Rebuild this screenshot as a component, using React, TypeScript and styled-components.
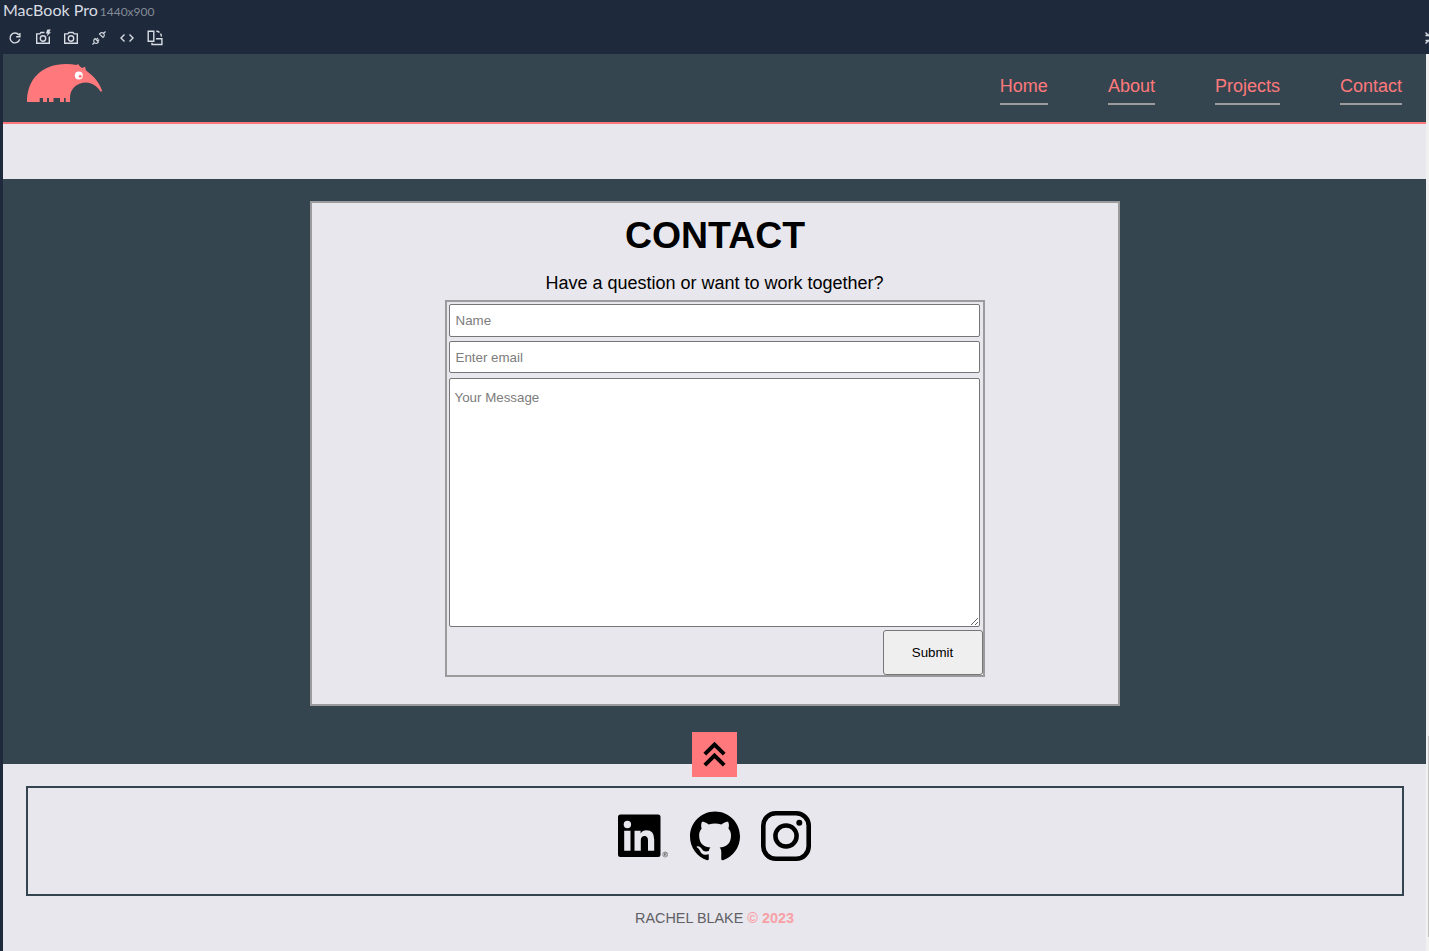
import React from "react";
import styled, { createGlobalStyle } from "styled-components";

const c = {
  navy: "#1e293b",
  charcoal: "#354550",
  pink: "#ff797c",
  light: "#e8e7ed",
  grey: "#9b9a9c",
};

const Global = createGlobalStyle`
  * { box-sizing: border-box; }
  body { margin: 0; overflow: hidden; background: ${c.navy}; font-family: "Liberation Sans", Arial, sans-serif; }
`;

const Shell = styled.div`
  width: 100%;
  height: 951px;
  padding-left: 3px;
  display: flex;
  flex-direction: column;
  overflow: hidden;
`;
const DeviceBar = styled.div`
  height: 54px;
  flex: none;
  color: #d8dce3;
  font-family: Lato, sans-serif;
`;
const DeviceTitle = styled.div`
  height: 22px;
  font-size: 16px;
  line-height: 20px;
  white-space: nowrap;
`;
const DeviceSize = styled.span`
  margin-left: 2px;
  font-size: 12px;
  color: #848b97;
`;
const Tools = styled.div`
  display: flex;
  align-items: center;
  height: 32px;
  padding-left: 4px;
  gap: 12px;
  svg { width: 16px; height: 16px; flex: none; overflow: visible; }
  svg:last-child { margin-left: auto; margin-right: -12px; }
`;
const Viewport = styled.div`
  flex: 1;
  min-height: 0;
  display: flex;
`;
const Page = styled.div`
  flex: 1;
  background: ${c.light};
`;
const Scrollbar = styled.div`
  width: 3px;
  padding: 682px 0 0 2px;
  background: #f1f1f1;
`;
const Thumb = styled.div`
  height: 201px;
  background: #c1c1c1;
`;
const Header = styled.header`
  height: 70px;
  padding: 10px 24px 0;
  display: flex;
  justify-content: space-between;
  background: ${c.charcoal};
  border-bottom: 2px solid ${c.pink};
`;
const Nav = styled.nav`
  display: flex;
  gap: 60px;
  padding-top: 11px;
`;
const NavLink = styled.a`
  height: 30px;
  font-size: 18px;
  line-height: 22px;
  color: ${c.pink};
  border-bottom: 2px solid ${c.grey};
`;
const Contact = styled.section`
  height: 585px;
  margin-top: 55px;
  padding-top: 22px;
  background: ${c.charcoal};
`;
const Card = styled.div`
  width: 810px;
  height: 505px;
  margin: 0 auto;
  display: flex;
  flex-direction: column;
  align-items: center;
  background: ${c.light};
  border: 2px solid ${c.grey};
`;
const Title = styled.h1`
  margin: 10px 0 0;
  padding-left: 1px;
  font-size: 37.4px;
  line-height: 44px;
  color: #000;
`;
const Lead = styled.p`
  margin: 15px 0 0;
  font-size: 18px;
  line-height: 22px;
  color: #000;
`;
const Form = styled.form`
  width: 540px;
  height: 377px;
  margin-top: 6px;
  padding: 2px 0 0 2px;
  border: 2px solid ${c.grey};
  display: flex;
  flex-direction: column;
`;
const Input = styled.input<{ $h: number }>`
  width: 531px;
  height: ${(p) => p.$h}px;
  margin: 0 0 4px;
  padding: 1px 6px;
  border: 1px solid #767676;
  border-radius: 2px;
  font: 13.33px "Liberation Sans", Arial, sans-serif;
  &::placeholder { color: #7c7c7c; }
`;
const Message = styled.textarea`
  width: 531px;
  height: 249px;
  margin: 1px 0 3px;
  padding: 11px 5px;
  border: 1px solid #767676;
  border-radius: 2px;
  font: 13.33px "Liberation Sans", Arial, sans-serif;
  &::placeholder { color: #7c7c7c; }
`;
const Submit = styled.button`
  align-self: flex-end;
  width: 100px;
  height: 45px;
  padding: 0;
  border: 1px solid #767676;
  border-radius: 3px;
  background: #efefef;
  color: #000;
  font: 13.33px "Liberation Sans", Arial, sans-serif;
`;
const ToTop = styled.a`
  position: relative;
  display: block;
  width: 45px;
  height: 45px;
  margin: 26px auto 0;
  background: ${c.pink};
  color: #000;
  svg { display: block; }
`;
const Footer = styled.footer`
  padding: 22px 22px 0 23px;
`;
const Socials = styled.div`
  height: 110px;
  padding: 23px 1px 0 0;
  display: flex;
  justify-content: center;
  gap: 21.5px;
  border: 2px solid ${c.charcoal};
  svg { width: 50px; height: 50px; }
`;
const Copyright = styled.p`
  margin: 13px 0 0;
  padding-right: 1px;
  text-align: center;
  font-size: 14.4px;
  line-height: 18px;
  color: #606065;
  b { color: #f7a0a6; }
`;

const Stroke = ({ children }: { children: React.ReactNode }) => (
  <svg viewBox="0 0 16 16" fill="none" stroke="currentColor" strokeWidth="1.4">
    {children}
  </svg>
);

const Tapir = () => (
  <svg width="76" height="39" viewBox="0 0 76 39">
    <path
      fill={c.pink}
      d="M0 38C0 15 15 0 39 0Q45 0 49.500 1L51 0L53 2.500L55 4L58 2.700L59 6.500C67 12 72.500 19 75.300 27.300L73.500 27.500C70 22 65 18.500 59 18.500C50 18.500 43 25 43 33.500V38H38.700V34H37V38H33V34H26.500V38H22V34H20V38H16V34H12.700V38Z"
    />
    <circle cx="51.800" cy="11.500" r="4" fill="#fff" />
    <circle cx="53.200" cy="12.300" r="1.500" fill={c.pink} />
  </svg>
);

const ChevronsUp = () => (
  <svg width="45" height="45" viewBox="0 0 45 45" fill="none" stroke="currentColor" strokeWidth="3.900">
    <path d="M12.800 22.200L22.500 12.500L32.200 22.200M12.800 33.200L22.500 23.500L32.200 33.200" />
  </svg>
);

const LinkedIn = () => (
  <svg viewBox="0 0 50 50">
    <path
      fillRule="evenodd"
      d="M2.500 3.500H40Q42.500 3.500 42.500 6V43.500Q42.500 46 40 46H2.500Q0 46 0 43.500V6Q0 3.500 2.500 3.500ZM6.200 19.700V39.700H12.500V19.700ZM9.400 9.800A3.700 3.700 0 1 0 9.400 17.200A3.700 3.700 0 1 0 9.400 9.800ZM16.500 19.700V39.700H22.800V29.500Q22.800 25 26.500 25Q30 25 30 29.500V39.700H36.200V28.500Q36.200 19.200 28.500 19.200Q24.500 19.200 22.600 22.500V19.700Z"
    />
    <circle cx="47.200" cy="43.500" r="2.500" fill="none" stroke="#555" strokeWidth=".6" />
    <path d="M46.300 45V42H47.500Q48.400 42 48.400 42.800T47.500 43.600H46.300M47.400 43.600L48.400 45" fill="none" stroke="#444" strokeWidth=".6" />
  </svg>
);

const GitHub = () => (
  <svg viewBox="0 -.15 16 16">
    <path d="M8 0C3.580 0 0 3.580 0 8c0 3.540 2.290 6.530 5.470 7.590.4.070.55-.17.55-.38 0-.19-.01-.82-.01-1.490-2.010.37-2.530-.49-2.690-.94-.09-.23-.48-.94-.82-1.130-.28-.15-.68-.52-.01-.53.63-.01 1.080.58 1.230.82.72 1.210 1.870.87 2.330.66.07-.52.28-.87.51-1.070-1.780-.2-3.640-.89-3.640-3.950 0-.87.31-1.590.82-2.150-.08-.2-.36-1.020.08-2.120 0 0 .67-.21 2.200.82.64-.18 1.320-.27 2-.27s1.360.09 2 .27c1.530-1.040 2.200-.82 2.200-.82.44 1.100.16 1.920.08 2.120.51.56.82 1.270.82 2.150 0 3.070-1.870 3.750-3.650 3.950.29.25.54.73.54 1.480 0 1.070-.01 1.930-.01 2.200 0 .21.15.46.55.38A8.010 8.010 0 0 0 16 8c0-4.420-3.580-8-8-8z" />
  </svg>
);

const Instagram = () => (
  <svg viewBox="0 0 50 50" fill="none" stroke="#000">
    <rect x="2.300" y="2.300" width="45.400" height="45.400" rx="12.500" strokeWidth="4.600" />
    <circle cx="25" cy="25" r="10.600" strokeWidth="4.500" />
    <circle cx="38.300" cy="11.700" r="3" fill="#000" stroke="none" />
  </svg>
);

const links = ["Home", "About", "Projects", "Contact"];

export default function App() {
  return (
    <Shell>
      <Global />
      <DeviceBar>
        <DeviceTitle>
          MacBook Pro<DeviceSize>1440x900</DeviceSize>
        </DeviceTitle>
        <Tools>
          <Stroke>
            <path d="M11.900 5A4.900 4.900 0 1 0 12.700 9.300M12.900 3V6.700H9.200" />
          </Stroke>
          <Stroke>
            <path d="M9.500 2.500H6L4.800 3.900H1.700V13.300H14.300V6.500" />
            <circle cx="8" cy="8.500" r="2.700" />
            <path d="M12.300 -.5H15.800L14.300 2.200H16L11.500 6.500L12.700 3.500H10.800Z" fill="currentColor" stroke="none" />
          </Stroke>
          <Stroke>
            <path d="M1.700 3.900H4.800L6 2.500H10L11.200 3.900H14.300V13.300H1.700Z" />
            <circle cx="8" cy="8.500" r="2.700" />
          </Stroke>
          <Stroke>
            <path d="M1.500 14.500L3.500 12.500M12.500 3.500L14.500 1.500M4 8.500L7.500 12L6.400 13Q5 13.800 3.400 12.600Q2.200 11 3 9.500ZM8.500 4L12 7.500L13 6.500Q13.800 5 12.600 3.400Q11 2.200 9.500 3ZM5.500 9.500L7 8M6.700 11L8.200 9.500" strokeWidth="1.100" />
          </Stroke>
          <Stroke>
            <path d="M5.500 4.500L2 8L5.500 11.500M10.500 4.500L14 8L10.500 11.500" />
          </Stroke>
          <Stroke>
            <path d="M1.200 1.200H6.800V11.200H1.200ZM9 8.700H14.900V14.500H5V12.700M9.300 1.300Q11.300 1.300 12.500 2.500M13.500 3.600Q14.400 4.900 14.400 6.600" />
          </Stroke>
          <Stroke>
            <path d="M.5 2.500L4 6M.5 5.500H4.500V2.500M.5 13.500L4 10M.5 10.500H4.500V13.500" />
          </Stroke>
        </Tools>
      </DeviceBar>
      <Viewport>
        <Page>
          <Header>
            <Tapir />
            <Nav>
              {links.map((l) => (
                <NavLink key={l}>{l}</NavLink>
              ))}
            </Nav>
          </Header>
          <Contact>
            <Card>
              <Title>CONTACT</Title>
              <Lead>Have a question or want to work together?</Lead>
              <Form>
                <Input $h={33} placeholder="Name" />
                <Input $h={32} placeholder="Enter email" />
                <Message placeholder="Your Message" />
                <Submit type="button">Submit</Submit>
              </Form>
            </Card>
            <ToTop>
              <ChevronsUp />
            </ToTop>
          </Contact>
          <Footer>
            <Socials>
              <LinkedIn />
              <GitHub />
              <Instagram />
            </Socials>
            <Copyright>
              RACHEL BLAKE <b>© 2023</b>
            </Copyright>
          </Footer>
        </Page>
        <Scrollbar>
          <Thumb />
        </Scrollbar>
      </Viewport>
    </Shell>
  );
}
